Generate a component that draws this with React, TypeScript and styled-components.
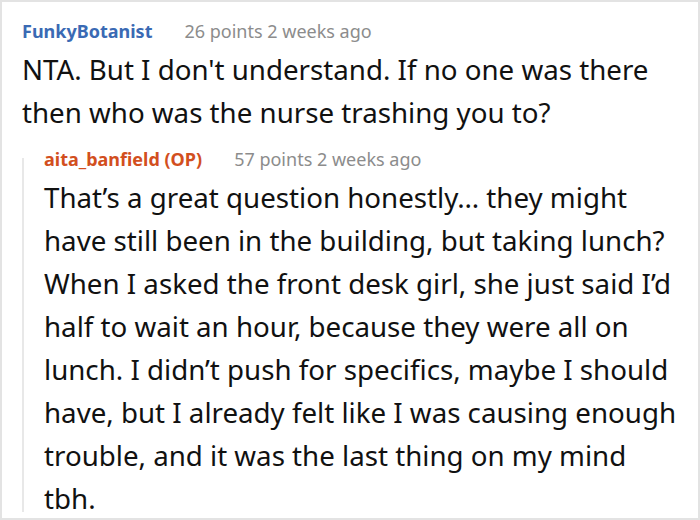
import styled, { createGlobalStyle } from 'styled-components'

const GlobalStyle = createGlobalStyle`
  html, body {
    margin: 0;
    padding: 0;
    background: #ffffff;
  }
  body {
    font-family: 'Noto Sans', 'Open Sans', sans-serif;
  }
`

type CommentData = {
  author: string
  isOp?: boolean
  points: number
  age: string
  body: string
}

const parent: CommentData = {
  author: 'FunkyBotanist',
  points: 26,
  age: '2 weeks ago',
  body: "NTA. But I don't understand. If no one was there then who was the nurse trashing you to?",
}

const reply: CommentData = {
  author: 'aita_banfield (OP)',
  isOp: true,
  points: 57,
  age: '2 weeks ago',
  body: 'That’s a great question honestly… they might have still been in the building, but taking lunch? When I asked the front desk girl, she just said I’d half to wait an hour, because they were all on lunch. I didn’t push for specifics, maybe I should have, but I already felt like I was causing enough trouble, and it was the last thing on my mind tbh.',
}

const App = () => {
  return (
    <>
      <GlobalStyle />
      <Frame>
        <Comment>
          <Meta>
            <Author $op={parent.isOp}>{parent.author}</Author>
            <Info>
              {parent.points} points {parent.age}
            </Info>
          </Meta>
          <Body>{parent.body}</Body>
        </Comment>
        <Reply>
          <Meta>
            <Author $op={reply.isOp}>{reply.author}</Author>
            <Info>
              {reply.points} points {reply.age}
            </Info>
          </Meta>
          <Body>{reply.body}</Body>
        </Reply>
      </Frame>
    </>
  )
}

export default App

const Frame = styled.div`
  width: 700px;
  height: 520px;
  box-sizing: border-box;
  border: 2px solid #e3e3e3;
  padding: 14px 17px 0 20px;
  overflow: hidden;
`

const Comment = styled.div`
  display: flex;
  flex-direction: column;
`

const Reply = styled.div`
  position: relative;
  display: flex;
  flex-direction: column;
  margin-top: 10px;
  padding-left: 22px;

  &::before {
    content: '';
    position: absolute;
    left: 0;
    top: 14px;
    bottom: 8px;
    width: 2px;
    background: #e8e8e8;
  }
`

const Meta = styled.div`
  display: flex;
  align-items: baseline;
  gap: 32px;
  font-size: 18px;
  line-height: 30px;
`

const Author = styled.span<{ $op?: boolean }>`
  font-weight: 700;
  color: ${(p) => (p.$op ? '#d24f1e' : '#3a6ab4')};
`

const Info = styled.span`
  color: #8c8c8c;
`

const Body = styled.p`
  margin: 2px 0 0;
  font-size: 27.7px;
  line-height: 43px;
  color: #111111;
`
